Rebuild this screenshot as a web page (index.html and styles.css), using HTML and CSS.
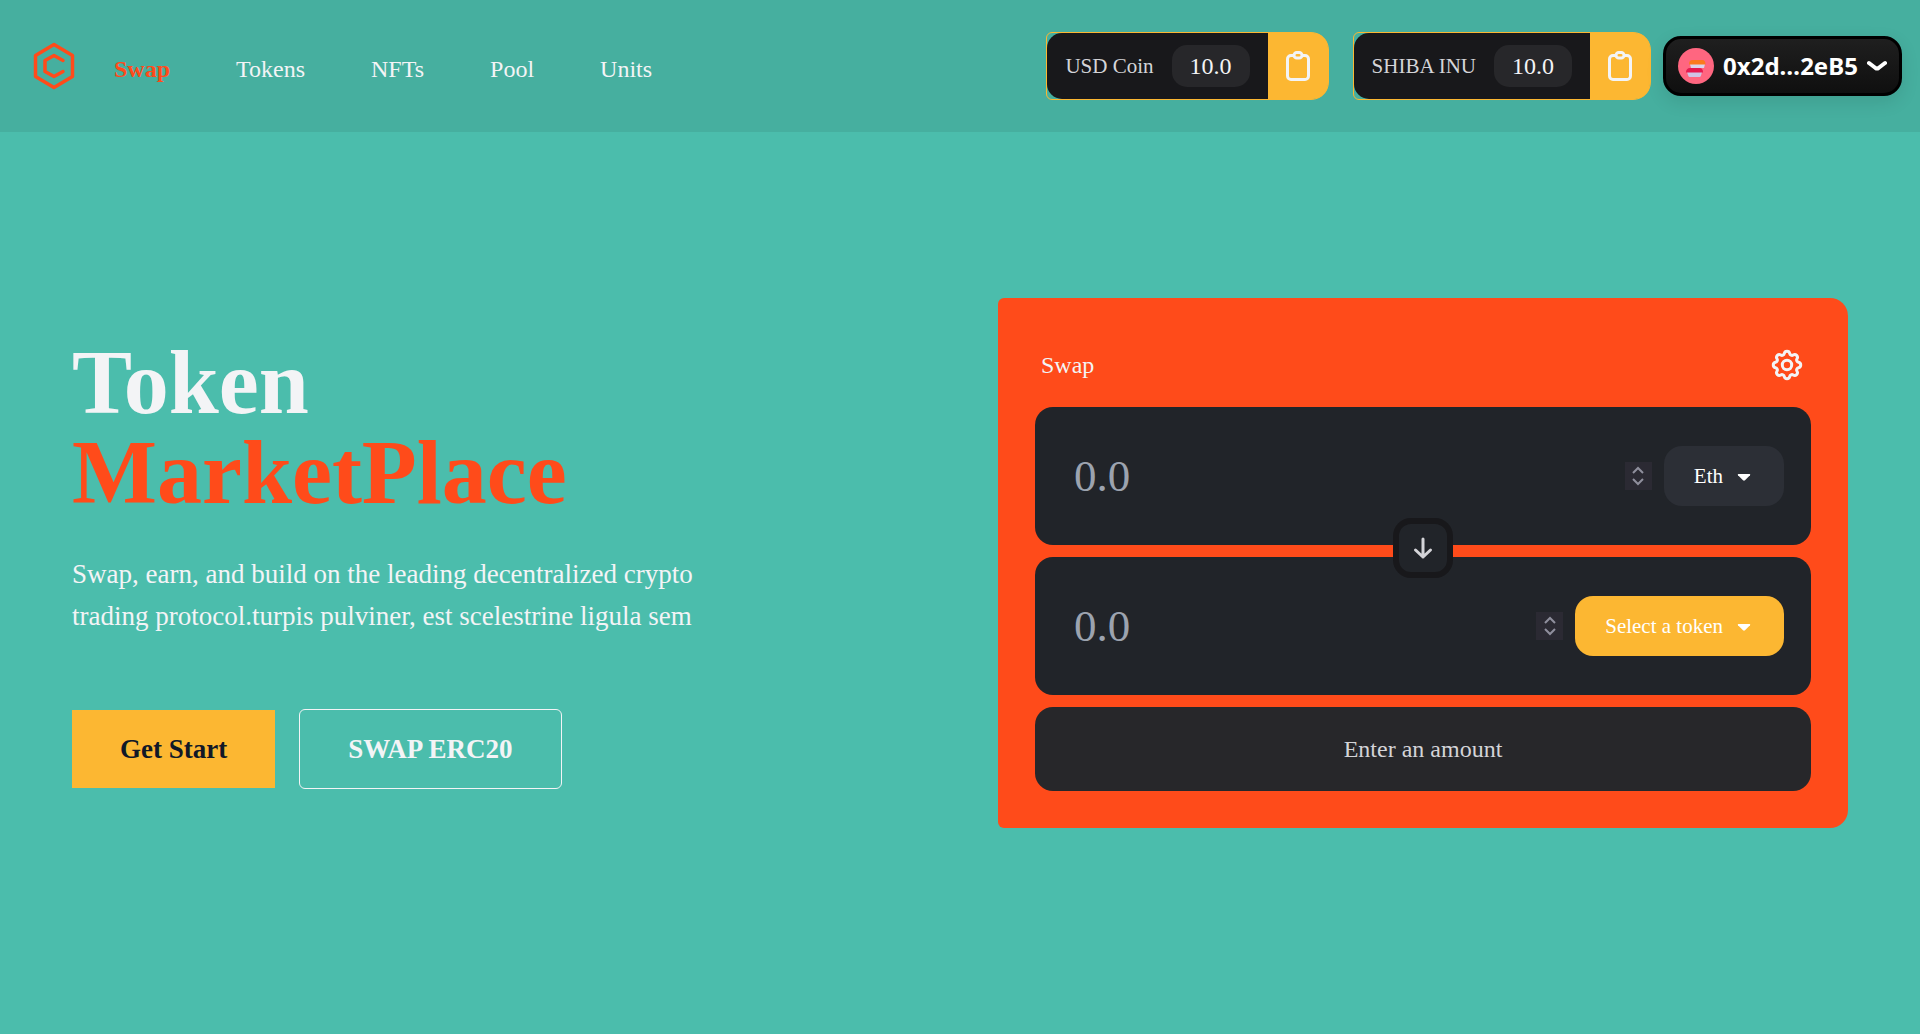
FILE: index.html
```html
<!DOCTYPE html>
<html lang="en">
<head>
<meta charset="utf-8">
<meta name="viewport" content="width=device-width, initial-scale=1">
<title>Token MarketPlace</title>
<link rel="stylesheet" href="styles.css">
</head>
<body>
<header class="header">
  <nav class="nav" aria-label="Main">
    <a class="logo" href="#" aria-label="Home">
      <svg width="42" height="48" viewBox="0 0 42 48" fill="none" stroke="currentColor" stroke-width="3.5" stroke-linejoin="round" stroke-linecap="round"><path d="M21 2.500 39.500 13.500V34.500L21 45.500 2.500 34.500V13.500Z"/><path d="M30 18.500 21 13.500 12 18.500V29.500L21 34.500 30 29.500"/></svg>
    </a>
    <ul class="nav-links">
      <li><a class="active" href="#">Swap</a></li>
      <li><a href="#">Tokens</a></li>
      <li><a href="#">NFTs</a></li>
      <li><a href="#">Pool</a></li>
      <li><a href="#">Units</a></li>
    </ul>
  </nav>
  <div class="account">
    <div class="balance">
      <div class="balance-info"><span>USD Coin</span><span class="amount">10.0</span></div>
      <button class="copy" aria-label="Copy USD Coin address">
        <svg width="24" height="30" viewBox="0 0 24 30" fill="none" stroke="currentColor" stroke-width="3"><path d="M8 4.500H5A3.500 3.500 0 0 0 1.500 8V25A3.500 3.500 0 0 0 5 28.500H19A3.500 3.500 0 0 0 22.500 25V8A3.500 3.500 0 0 0 19 4.500H16"/><rect x="8" y="1.500" width="8" height="5.500" rx="2.750"/></svg>
      </button>
    </div>
    <div class="balance">
      <div class="balance-info"><span>SHIBA INU</span><span class="amount">10.0</span></div>
      <button class="copy" aria-label="Copy SHIBA INU address">
        <svg width="24" height="30" viewBox="0 0 24 30" fill="none" stroke="currentColor" stroke-width="3"><path d="M8 4.500H5A3.500 3.500 0 0 0 1.500 8V25A3.500 3.500 0 0 0 5 28.500H19A3.500 3.500 0 0 0 22.500 25V8A3.500 3.500 0 0 0 19 4.500H16"/><rect x="8" y="1.500" width="8" height="5.500" rx="2.750"/></svg>
      </button>
    </div>
    <button class="wallet">
      <svg width="36" height="36" viewBox="0 0 36 36"><circle cx="18" cy="18" r="18" fill="#ff6680"/><path d="M12 16h15l-1 4H13z" fill="#dcd3ea"/><path d="M11 16.500c0-3.200 1-4.500 4-4.500h9.500c2 0 3 1.500 3 4.500z" fill="#fb7a1e"/><path d="M9 24h15l-1 3.500c-.3 1.200-1 1.500-2 1.500h-8.500c-1.500 0-2-.5-2.300-1.500z" fill="#cfc4e6"/><path d="M8 24.500c0-3 1.500-4.500 4-4.500h9.500c2.500 0 3.500 1.500 3.500 4.500z" fill="#e6194f"/></svg>
      <span>0x2d…2eB5</span>
      <svg width="20" height="12" viewBox="0 0 20 12" fill="none" stroke="currentColor" stroke-width="4" stroke-linecap="round" stroke-linejoin="round"><path d="M2 3 8.500 8Q10 9 11.500 8L18 3"/></svg>
    </button>
  </div>
</header>
<main class="hero">
  <section>
    <h1 class="title">Token <span class="accent">MarketPlace</span></h1>
    <p class="lead">Swap, earn, and build on the leading decentralized crypto trading protocol.turpis pulviner, est scelestrine ligula sem</p>
    <div class="actions">
      <a class="btn btn-primary" href="#">Get Start</a>
      <a class="btn btn-outline" href="#">SWAP ERC20</a>
    </div>
  </section>
  <form class="card">
    <div class="card-head">
      <h2 class="card-title">Swap</h2>
      <button type="button" aria-label="Settings">
        <svg width="36" height="36" viewBox="0 0 36 36" fill="none" stroke="currentColor" stroke-width="3" stroke-linejoin="round"><circle cx="18" cy="18" r="4.700"/><path d="M15.300 6.500 A2.750 2.750 0 0 1 20.700 6.500 A2.300 2.300 0 0 0 24.200 8 A2.750 2.750 0 0 1 28 11.800 A2.300 2.300 0 0 0 29.500 15.300 A2.750 2.750 0 0 1 29.500 20.700 A2.300 2.300 0 0 0 28 24.200 A2.750 2.750 0 0 1 24.200 28 A2.300 2.300 0 0 0 20.700 29.500 A2.750 2.750 0 0 1 15.300 29.500 A2.300 2.300 0 0 0 11.800 28 A2.750 2.750 0 0 1 8 24.200 A2.300 2.300 0 0 0 6.500 20.700 A2.750 2.750 0 0 1 6.500 15.300 A2.300 2.300 0 0 0 8 11.800 A2.750 2.750 0 0 1 11.800 8 A2.300 2.300 0 0 0 15.300 6.500 Z"/></svg>
      </button>
    </div>
    <div class="fields">
      <div class="field">
        <input class="value" type="number" placeholder="0.0" aria-label="Amount to pay">
        <span class="spinner" aria-hidden="true"><svg width="12" height="20" viewBox="0 0 12 20" fill="none" stroke="currentColor" stroke-width="2"><path d="M1 7 6 2 11 7M1 13 6 18 11 13"/></svg></span>
        <button type="button" class="token">Eth <svg width="24" height="24" viewBox="0 0 24 24" fill="currentColor"><path d="M6.500 10h11q1.200 0 .5 1.200L13 16.300q-1 .9-2 0L6 11.200Q5.300 10 6.500 10z"/></svg></button>
      </div>
      <div class="field">
        <input class="value" type="number" placeholder="0.0" aria-label="Amount to receive">
        <span class="spinner" aria-hidden="true"><svg width="12" height="20" viewBox="0 0 12 20" fill="none" stroke="currentColor" stroke-width="2"><path d="M1 7 6 2 11 7M1 13 6 18 11 13"/></svg></span>
        <button type="button" class="token token-empty">Select a token <svg width="24" height="24" viewBox="0 0 24 24" fill="currentColor"><path d="M6.500 10h11q1.200 0 .5 1.200L13 16.300q-1 .9-2 0L6 11.200Q5.300 10 6.500 10z"/></svg></button>
      </div>
      <button type="button" class="flip" aria-label="Switch tokens">
        <svg width="20" height="24" viewBox="0 0 20 24" fill="none" stroke="currentColor" stroke-width="3" stroke-linecap="round" stroke-linejoin="round"><path d="M10 3V21M2.500 14 10 21 17.500 14"/></svg>
      </button>
    </div>
    <button type="submit" class="submit">Enter an amount</button>
  </form>
</main>
</body>
</html>
```
FILE: styles.css
```css
* {
  box-sizing: border-box;
}

body {
  margin: 0;
  min-height: 100vh;
  background: #4bbdac;
  color: #f3f4f6;
  font: 24px/36px "Liberation Serif", "Times New Roman", serif;
}

a {
  color: inherit;
  text-decoration: none;
}

button {
  margin: 0;
  padding: 0;
  border: 0;
  background: none;
  color: inherit;
  font: inherit;
  cursor: pointer;
}

svg {
  display: block;
  flex: none;
}

.header {
  display: flex;
  align-items: center;
  justify-content: space-between;
  min-height: 132px;
  padding: 24px 18px 24px 33px;
  background: #46af9f;
}

.nav {
  display: flex;
  align-items: center;
  gap: 39px;
}

.logo {
  color: #ff4b1a;
}

.nav-links {
  display: flex;
  gap: 66px;
  margin: 0;
  padding: 6px 0 0;
  list-style: none;
}

.active {
  color: #ff4b1a;
  font-weight: 700;
}

.account {
  display: flex;
  align-items: center;
}

.balance {
  display: flex;
  margin-right: 24px;
  border: 1px solid #fcb732;
  border-radius: 6px 18px 18px 6px;
  font-size: 21px;
}

.balance + .balance {
  margin-right: 12px;
}

.balance-info {
  display: flex;
  align-items: center;
  gap: 18px;
  padding: 12px 18px;
  border-radius: 15px 0 0 15px;
  background: #18181b;
  color: #d4d4d8;
}

.amount {
  padding: 3px 18px;
  border-radius: 15px;
  background: #27272a;
  color: #f3f4f6;
  font-size: 24px;
}

.copy {
  display: flex;
  align-items: center;
  padding: 0 18px;
  border-radius: 0 15px 15px 0;
  background: #fcb732;
}

.wallet {
  display: flex;
  align-items: center;
  justify-content: space-between;
  width: 239px;
  height: 60px;
  padding: 0 12px;
  border: 3px solid #000;
  border-radius: 18px;
  background: linear-gradient(#1f1f1f, #0f0f0f);
  box-shadow: 0 6px 18px rgba(0, 0, 0, 0.1);
  color: #fff;
  font: 700 24px/36px "Noto Sans", "Open Sans", sans-serif;
}

.hero {
  display: grid;
  grid-template-columns: 1fr 1fr;
  align-items: center;
  gap: 76px;
  padding: 166px 72px;
}

.title {
  margin: 0 0 35px;
  font-size: 90px;
  line-height: 90px;
}

.accent {
  display: block;
  color: #ff4b1a;
}

.lead {
  max-width: 640px;
  margin: 0 0 72px;
  font-size: 27px;
  line-height: 42px;
}

.actions {
  display: flex;
  align-items: center;
  gap: 24px;
}

.btn {
  padding: 18px 48px;
  font-size: 27px;
  font-weight: 700;
  line-height: 42px;
}

.btn-primary {
  background: #fcb732;
  color: #111827;
}

.btn-outline {
  border: 1px solid #f3f4f6;
  border-radius: 6px;
}

.card {
  padding: 37px;
  border-radius: 6px 18px 18px 6px;
  background: #ff4b1a;
}

.card-head {
  display: flex;
  align-items: center;
  justify-content: space-between;
  padding: 12px 6px 24px;
}

.card-title {
  margin: 0;
  font-size: 24px;
  font-weight: 400;
}

.fields {
  position: relative;
  display: grid;
  gap: 12px;
}

.field {
  display: flex;
  align-items: center;
  min-height: 138px;
  padding: 0 27px;
  border-radius: 18px;
  background: #212429;
}

.value {
  flex: 1;
  width: 0;
  min-width: 0;
  padding: 12px;
  border: 0;
  outline: 0;
  background: none;
  color: #f3f4f6;
  font: 45px/60px "Liberation Serif", "Times New Roman", serif;
  appearance: textfield;
}

.value::placeholder {
  color: #9ca3af;
}

.value::-webkit-inner-spin-button {
  appearance: none;
}

.spinner {
  display: grid;
  place-items: center;
  width: 27px;
  height: 28px;
  margin-right: 12px;
  background: #2b2a33;
  color: #8f8f9d;
}

.token {
  display: flex;
  align-items: center;
  gap: 9px;
  padding: 12px 28px 12px 30px;
  border-radius: 18px;
  background: #2c2f36;
  color: #fff;
  font-size: 21px;
}

.token-empty {
  background: #fcb732;
}

/* Sits over the seam between the two amount fields. */
.flip {
  position: absolute;
  top: 111px;
  left: calc(50% - 30px);
  display: grid;
  place-items: center;
  width: 60px;
  height: 60px;
  border: 6px solid #18181b;
  border-radius: 18px;
  background: #212429;
  color: #d4d4d8;
}

.submit {
  display: block;
  width: 100%;
  margin-top: 12px;
  padding: 24px;
  border-radius: 18px;
  background: #27272a;
  color: #d4d4d8;
}

@media (max-width: 1500px) {
  .header {
    flex-wrap: wrap;
    gap: 24px;
  }

  .hero {
    grid-template-columns: 1fr;
    padding: 72px;
  }
}
```
